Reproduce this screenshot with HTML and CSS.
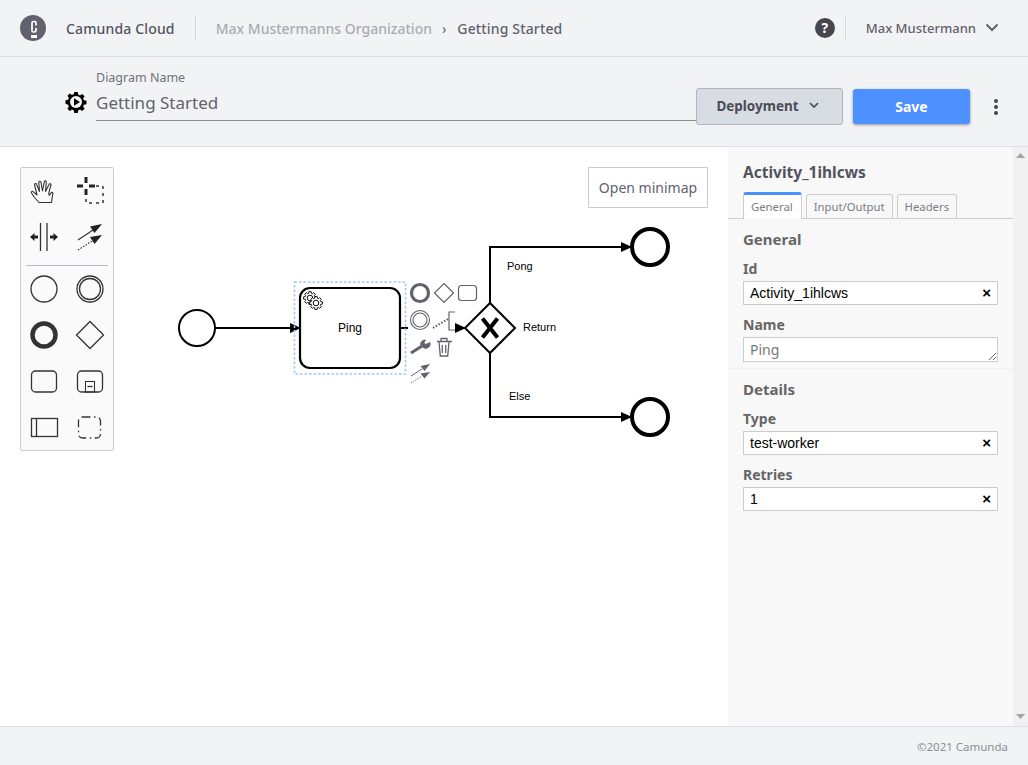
FILE: index.html
```html
<!DOCTYPE html>
<html>
<head>
    <meta charset="utf-8" />
    <title>Getting Started</title>
    <link rel="stylesheet" href="styles.css">
</head>
<body>
    <header class="topbar">
        <svg class="logo" width="26" height="26" viewBox="0 0 26 26">
            <circle cx="13" cy="13" r="13" fill="#62626e" />
            <path d="M16 10.500V8c0-1-.6-1.500-1.500-1.500h-1c-1 0-1.500.5-1.500 1.500v7.500c0 1 .5 1.500 1.500 1.500h1c.9 0 1.500-.5 1.500-1.500v-2.500" fill="none" stroke="#fff" stroke-width="1.700" />
            <rect x="11" y="20" width="6" height="3" fill="#fff" />
        </svg>
        <span class="brand">Camunda Cloud</span>
        <span class="divider"></span>
        <nav class="crumbs">
            <span class="crumb-org">Max Mustermanns Organization</span>
            <span class="crumb-sep">›</span>
            <span class="crumb-current">Getting Started</span>
        </nav>
        <span class="help">?</span>
        <span class="divider divider-user"></span>
        <span class="username">Max Mustermann</span>
        <svg class="user-chevron" width="14" height="9" viewBox="0 0 14 9">
            <path d="M1.500 1.500L7 7l5.500-5.500" fill="none" stroke="#62626e" stroke-width="2" />
        </svg>
    </header>

    <section class="namebar">
        <svg class="process-icon" width="20" height="20" viewBox="0 0 20 20">
            <path d="M8.300 0h3.400l.5 2.600 1.800.8 2.200-1.500 2.400 2.400-1.500 2.200.8 1.800 2.600.5v3.400l-2.600.5-.8 1.800 1.500 2.200-2.400 2.400-2.200-1.500-1.800.8-.5 2.600H8.300l-.5-2.600-1.800-.8-2.200 1.500-2.400-2.400 1.500-2.200-.8-1.800L-.5 11.700V8.300l2.600-.5.8-1.800-1.500-2.200 2.400-2.400 2.200 1.500 1.800-.8z" fill="#000" />
            <circle cx="10" cy="10" r="6" fill="#f2f3f5" />
            <path d="M8 6.200L14 10l-6 3.800z" fill="#000" />
        </svg>
        <div class="name-block">
            <label class="name-label">Diagram Name</label>
            <input class="name-input" type="text" value="Getting Started">
        </div>
        <button class="btn-deploy">Deployment
            <svg width="10" height="7" viewBox="0 0 10 7"><path d="M1 1l4 4 4-4" fill="none" stroke="#4a4c55" stroke-width="1.600" /></svg>
        </button>
        <button class="btn-save">Save</button>
        <div class="kebab"><i></i><i></i><i></i></div>
    </section>

    <main class="workspace">
        <div class="canvas">
            <div class="palette">
                <!-- hand -->
                <svg class="tool" viewBox="0 0 46 46"><path d="M18 34.500L13.500 29.500 10.500 25c-.7-1.200.8-2.300 1.900-1.200L16 27 13.600 17c-.3-1.400 1.600-2 2.100-.6L18.500 23.500 17.800 14.500c-.1-1.500 2-1.600 2.200-.1L21.500 23 23.300 13.800c.3-1.500 2.200-1.100 2 .4L24.500 23.500 28 16.500c.6-1.300 2.400-.6 1.900.7L27.800 25l.3 2.500 2-2.700c.8-1 2.200-.2 1.700.9L30.500 34.500z" fill="none" stroke="#333" stroke-width="1.100" stroke-linejoin="round" /></svg>
                <!-- lasso -->
                <svg class="tool" viewBox="0 0 46 46"><path d="M10 18h6M22 18h6M19 9v6M19 21v6" stroke="#222" stroke-width="3" fill="none" /><path d="M29 18h7v17H19v-6" stroke="#333" stroke-width="1.500" stroke-dasharray="3 4" fill="none" /></svg>
                <!-- space -->
                <svg class="tool" viewBox="0 0 46 46"><path d="M19.500 9v28M26 9v28" stroke="#333" stroke-width="1.300" /><path d="M9 23l4.500-4v2.500h3.500v3h-3.500V27zM37 23l-4.500-4v2.500H29v3h3.500V27z" fill="#222" /></svg>
                <!-- connect -->
                <svg class="tool" viewBox="0 0 46 46"><path d="M11 26l15-10" stroke="#333" stroke-width="1.200" /><path d="M35 10l-12 2.500 4.500 6.500z" fill="#222" /><path d="M11 36l15-9.500" stroke="#333" stroke-width="1.200" stroke-dasharray="1.500 1.500" /><path d="M35 21l-12 2 4.500 7z" fill="#222" /></svg>
                <div class="palette-sep"></div>
                <svg class="tool" viewBox="0 0 46 46"><circle cx="23" cy="23" r="13" fill="none" stroke="#333" stroke-width="1.300" /></svg>
                <svg class="tool" viewBox="0 0 46 46"><circle cx="23" cy="23" r="13" fill="none" stroke="#333" stroke-width="1.300" /><circle cx="23" cy="23" r="10.500" fill="none" stroke="#333" stroke-width="1.300" /></svg>
                <svg class="tool" viewBox="0 0 46 46"><circle cx="23" cy="23" r="11.500" fill="none" stroke="#333" stroke-width="4.500" /></svg>
                <svg class="tool" viewBox="0 0 46 46"><path d="M23 9.500L36.500 23 23 36.500 9.500 23z" fill="none" stroke="#333" stroke-width="1.300" /></svg>
                <svg class="tool" viewBox="0 0 46 46"><rect x="10.500" y="13" width="25" height="21" rx="4" fill="none" stroke="#333" stroke-width="1.300" /></svg>
                <svg class="tool" viewBox="0 0 46 46"><rect x="10.500" y="13" width="25" height="21" rx="4" fill="none" stroke="#333" stroke-width="1.300" /><rect x="18.500" y="23.500" width="9" height="10.500" fill="none" stroke="#333" stroke-width="1.100" /><path d="M20.500 28.500h5" stroke="#333" stroke-width="1.300" /></svg>
                <svg class="tool" viewBox="0 0 46 46"><rect x="10.500" y="14.500" width="26" height="18" fill="none" stroke="#333" stroke-width="1.300" /><path d="M15.500 14.500v18" stroke="#333" stroke-width="1.300" /></svg>
                <svg class="tool" viewBox="0 0 46 46"><rect x="11.500" y="13" width="22" height="21" rx="4" fill="none" stroke="#333" stroke-width="1.300" stroke-dasharray="8 3.500 1.500 3.500" /></svg>
            </div>

            <button class="btn-minimap">Open minimap</button>

            <svg class="diagram" viewBox="0 147 728 579">
                <defs>
                    <polygon id="gear" points="6.400,-1.130 6.400,1.130 4.710,1.350 4.290,2.380 5.320,3.730 3.730,5.320 2.380,4.290 1.350,4.710 1.130,6.400 -1.130,6.400 -1.350,4.710 -2.380,4.290 -3.730,5.320 -5.320,3.730 -4.290,2.380 -4.710,1.350 -6.400,1.130 -6.400,-1.130 -4.710,-1.350 -4.290,-2.380 -5.320,-3.730 -3.730,-5.320 -2.380,-4.290 -1.350,-4.710 -1.130,-6.400 1.130,-6.400 1.350,-4.710 2.380,-4.290 3.730,-5.320 5.320,-3.730 4.290,-2.380 4.710,-1.350" />
                </defs>
                <g fill="none" stroke="#000" stroke-width="2">
                    <circle cx="197" cy="328" r="18" />
                    <path d="M215 328h76" />
                    <rect x="300" y="288" width="100" height="80" rx="10" stroke-width="2.200" />
                    <path d="M400 328h57" />
                    <path d="M490 303V247H622" />
                    <path d="M490 353V417H622" />
                    <circle cx="650" cy="247" r="18" stroke-width="4" />
                    <circle cx="650" cy="417" r="18" stroke-width="4" />
                    <path d="M490 303l25 25-25 25-25-25z" fill="#fff" />
                    <path d="M482.500 318.500l15 19M497.500 318.500l-15 19" stroke-width="4" />
                </g>
                <g fill="#000">
                    <path d="M290 323l11 5-11 5z" />
                    <path d="M621 242l11 5-11 5z" />
                    <path d="M621 412l11 5-11 5z" />
                </g>
                <!-- service task gears -->
                <g fill="#fff" stroke="#111" stroke-width="1">
                    <use href="#gear" x="310" y="298" />
                    <circle cx="310" cy="298" r="2.800" />
                    <use href="#gear" x="316" y="303" />
                    <circle cx="316" cy="303" r="2.800" />
                </g>
                <rect x="294.500" y="282" width="111" height="92" fill="none" stroke="#a5c5f8" stroke-width="1.600" stroke-dasharray="2.500 2" />
                <g class="diagram-label">
                    <text class="task-label" x="350" y="332" text-anchor="middle">Ping</text>
                    <text x="507" y="270">Pong</text>
                    <text x="523" y="331">Return</text>
                    <text x="509" y="400">Else</text>
                </g>
                <!-- context pad -->
                <rect x="408" y="283" width="47" height="102" fill="#fff" />
                <path d="M455 323l11 5-11 5z" fill="#000" />
                <g fill="none" stroke="#62626e">
                    <circle cx="420" cy="293" r="8.500" stroke-width="3.200" />
                    <path d="M444 283.500l9.500 9.500-9.500 9.500-9.500-9.500z" stroke-width="1.200" />
                    <rect x="458.500" y="285.500" width="18" height="15" rx="3" stroke-width="1.200" />
                    <circle cx="420" cy="320" r="9.500" stroke-width="1.100" />
                    <circle cx="420" cy="320" r="7" stroke-width="1.100" />
                    <path d="M433 328l15-9" stroke-width="2" stroke-dasharray="1.600 1.600" />
                    <path d="M455 312h-6v18h6" stroke-width="1.200" />
                    <path d="M411 353l11-7" stroke-width="3" />
                    <path d="M430 342.500a4.500 4.500 0 0 1-7.500 4.500l-2-2.500a4.500 4.500 0 0 1 5-4.500l-1.500 2.500 1.500 2z" fill="#62626e" stroke-width=".8" />
                    <path d="M437 341.500h15M441 341v-2.500h6v2.500M439 342l1.300 14h7.400l1.300-14M442.300 345v8M445.700 345v8" stroke-width="1.300" />
                    <path d="M411 376l11-7" stroke-width="1" />
                    <path d="M411 383l11-7" stroke-width="1" stroke-dasharray="1.300 1.300" />
                </g>
                <path d="M430 364l-9.500 2 4 5zM430 372l-9.500 1.500 4 5z" fill="#62626e" />
            </svg>
        </div>

        <aside class="panel">
            <h1 class="panel-title">Activity_1ihlcws</h1>
            <div class="tabs">
                <span class="tab tab-active">General</span>
                <span class="tab">Input/Output</span>
                <span class="tab">Headers</span>
            </div>

            <div class="group group-general">
                <h2 class="group-title">General</h2>
                <div class="entry">
                    <label class="entry-label">Id</label>
                    <div class="field"><input type="text" value="Activity_1ihlcws"><span class="clear">×</span></div>
                </div>
                <div class="entry">
                    <label class="entry-label">Name</label>
                    <textarea class="entry-text">Ping</textarea>
                </div>
            </div>

            <div class="group">
                <h2 class="group-title">Details</h2>
                <div class="entry">
                    <label class="entry-label">Type</label>
                    <div class="field"><input type="text" value="test-worker"><span class="clear">×</span></div>
                </div>
                <div class="entry">
                    <label class="entry-label">Retries</label>
                    <div class="field"><input type="text" value="1"><span class="clear">×</span></div>
                </div>
            </div>
        </aside>

        <div class="scrollbar">
            <svg width="9" height="5" viewBox="0 0 9 5"><path d="M4.500 0L9 5H0z" fill="#a3a3a3" /></svg>
            <svg width="9" height="5" viewBox="0 0 9 5"><path d="M4.500 5L0 0h9z" fill="#a3a3a3" /></svg>
        </div>
    </main>

    <footer class="footer">©2021 Camunda</footer>
</body>
</html>
```

FILE: styles.css
```css
* {
    box-sizing: border-box;
}
html, body {
    height: 100%;
}
body {
    margin: 0;
    display: flex;
    flex-direction: column;
    overflow: hidden;
    background: #f2f3f5;
    font-family: "Noto Sans", "Liberation Sans", sans-serif;
    color: #52535f;
}

/* top bar */
.topbar {
    height: 57px;
    flex: none;
    display: flex;
    align-items: center;
    padding: 0 29px 1px 20px;
    border-bottom: 1px solid #dcdfe6;
    font-size: 14px;
}
.brand {
    margin: 2px 0 0 20px;
    font-weight: 500;
    letter-spacing: 0.15px;
    color: #52535f;
}
.divider {
    width: 1px;
    height: 24px;
    margin: 0 20px;
    background: #d4d7de;
}
.crumbs {
    flex: 1;
    margin-top: 2px;
    display: flex;
    align-items: center;
}
.crumb-org {
    color: #a9abb3;
    font-weight: 500;
}
.crumb-sep {
    margin: 0 11px 0 10px;
    color: #62626e;
}
.crumb-current {
    color: #62626e;
    font-weight: 500;
    letter-spacing: 0.15px;
}
.help {
    width: 20px;
    height: 20px;
    border-radius: 50%;
    background: #45464e;
    color: #fff;
    font-size: 14px;
    font-weight: 700;
    line-height: 20px;
    text-align: center;
}
.divider-user {
    margin: 0 20px 0 10px;
}
.username {
    font-size: 13px;
    color: #62626e;
    font-weight: 500;
}
.user-chevron {
    margin-left: 9px;
}

/* diagram name bar */
.namebar {
    height: 90px;
    flex: none;
    display: flex;
    align-items: flex-start;
    padding-left: 66px;
    border-bottom: 1px solid #dcdfe6;
}
.process-icon {
    margin-top: 35px;
    overflow: visible;
}
.name-block {
    flex: 1;
    margin: 13px 0 0 10px;
    display: flex;
    flex-direction: column;
}
.name-label {
    font-size: 12.500px;
    line-height: 16px;
    color: #6f717b;
}
.name-input {
    height: 35px;
    padding: 0 0 2px;
    border: 0;
    border-bottom: 1px solid #8a8c94;
    background: transparent;
    font-family: inherit;
    font-size: 17px;
    color: #62636f;
    outline: none;
}
.btn-deploy {
    width: 147px;
    height: 37px;
    margin-top: 31px;
    padding: 0 4px 2px 0;
    display: flex;
    align-items: center;
    justify-content: center;
    gap: 10px;
    background: #d8dce3;
    border: 1px solid #b0b6c3;
    border-radius: 3px;
    font-family: inherit;
    font-size: 13.500px;
    font-weight: 700;
    color: #4a4c55;
}
.btn-save {
    width: 117px;
    height: 35px;
    margin: 32px 0 0 10px;
    background: #4d90ff;
    border: 0;
    border-radius: 3px;
    box-shadow: 0 1px 3px rgba(0, 0, 0, 0.4);
    font-family: inherit;
    font-size: 14px;
    font-weight: 700;
    color: #fff;
}
.kebab {
    margin: 42px 30px 0 24px;
    display: flex;
    flex-direction: column;
    gap: 2px;
}
.kebab i {
    width: 4px;
    height: 4px;
    border-radius: 50%;
    background: #45464e;
}

/* main area */
.workspace {
    flex: 1;
    min-height: 0;
    display: flex;
}
.canvas {
    flex: 1;
    position: relative;
    background: #fff;
}
.diagram {
    display: block;
    width: 728px;
    height: 579px;
}
.diagram-label text {
    font-family: "Liberation Sans", sans-serif;
    font-size: 11px;
    fill: #000;
}
.diagram-label .task-label {
    font-size: 12px;
}
.palette {
    position: absolute;
    z-index: 1;
    left: 20px;
    top: 20px;
    width: 94px;
    display: grid;
    grid-template-columns: 46px 46px;
    background: #fafafa;
    border: 1px solid #ccc;
    border-radius: 2px;
}
.tool {
    display: block;
    width: 46px;
    height: 46px;
}
.palette-sep {
    grid-column: 1 / 3;
    height: 6px;
    margin: 0 5px;
    border-bottom: 1px solid #b9bcc6;
}
.btn-minimap {
    position: absolute;
    z-index: 1;
    right: 20px;
    top: 20px;
    width: 120px;
    height: 41px;
    background: #fff;
    border: 1px solid #ccc;
    font-family: inherit;
    font-size: 14px;
    color: #62626e;
}

/* properties panel */
.panel {
    width: 285px;
    flex: none;
    background: #f8f8f8;
    color: #666;
}
.panel-title {
    margin: 0;
    padding: 15px 15px 0;
    height: 45px;
    font-size: 15.500px;
    line-height: 20px;
    font-weight: 700;
    color: #52535f;
}
.tabs {
    display: flex;
    gap: 4px;
    height: 27px;
    padding-left: 15px;
    border-bottom: 1px solid #ccc;
}
.tab {
    height: 24px;
    margin-top: 2px;
    padding: 0 7px;
    background: #f8f8f8;
    border: 1px solid #ccc;
    border-bottom: 0;
    border-radius: 3px 3px 0 0;
    font-size: 11.300px;
    line-height: 23px;
    color: #7a7c85;
}
.tab-active {
    height: 27px;
    margin-top: 0;
    padding-right: 8px;
    line-height: 23px;
    border-top: 3px solid #4d90ff;
    background: #fff;
    position: relative;
    z-index: 1;
}
.group {
    padding: 10px 15px 0;
}
.group-general {
    height: 150px;
    border-bottom: 1px solid #f1f1f1;
}
.group-title {
    margin: 0;
    font-size: 15px;
    line-height: 20px;
    font-weight: 700;
    color: #666;
}
.entry {
    margin-top: 10px;
}
.entry-label {
    display: block;
    margin-bottom: 2px;
    font-size: 14px;
    line-height: 20px;
    font-weight: 700;
    color: #666;
}
.field {
    width: 255px;
    height: 24px;
    display: flex;
    align-items: center;
    padding: 0 6px 0 6px;
    background: #fff;
    border: 1px solid #ccc;
}
.field input {
    flex: 1;
    min-width: 0;
    padding: 0;
    border: 0;
    font-family: "Liberation Sans", sans-serif;
    font-size: 14px;
    color: #000;
    outline: none;
}
.clear {
    margin-bottom: 2px;
    font-family: "Liberation Sans", sans-serif;
    font-size: 15px;
    font-weight: 700;
    color: #000;
}
.entry-text {
    display: block;
    width: 255px;
    height: 25px;
    padding: 2px 6px;
    background: #fff;
    border: 1px solid #ccc;
    border-radius: 0;
    font-family: inherit;
    font-size: 14px;
    color: #777;
    outline: none;
}
.scrollbar {
    width: 15px;
    flex: none;
    display: flex;
    flex-direction: column;
    justify-content: space-between;
    align-items: center;
    padding: 6px 0 7px;
    background: #f1f1f1;
}

/* footer */
.footer {
    height: 39px;
    flex: none;
    padding: 12px 20px 0 0;
    border-top: 1px solid #dcdfe6;
    font-size: 11.500px;
    line-height: 16px;
    text-align: right;
    color: #8b8e98;
}
```
